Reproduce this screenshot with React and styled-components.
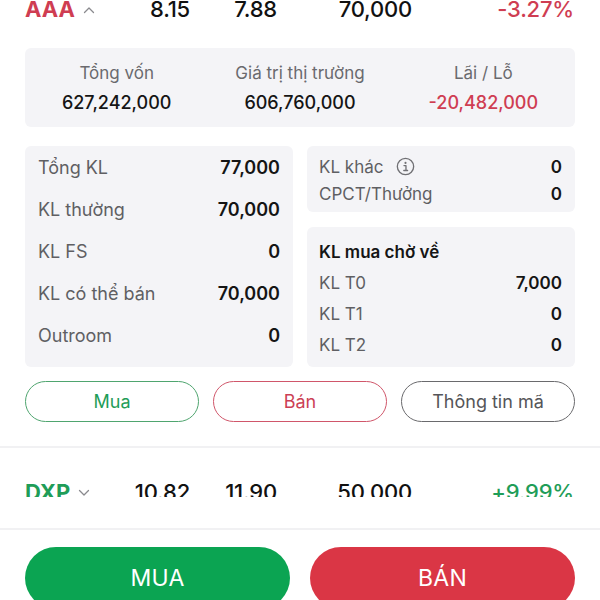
import React from 'react'
import styled, { createGlobalStyle } from 'styled-components'

const GlobalStyle = createGlobalStyle`
  html, body {
    margin: 0;
    padding: 0;
    background: #ffffff;
  }
  body {
    font-family: 'Inter', 'Noto Sans', sans-serif;
    color: #151515;
  }
`

const RED = '#cf3d52'
const GREEN = '#1f9d58'

const Caret = ({ up }) => (
  <CaretSvg viewBox="0 0 12 8" width="12" height="8">
    <polyline
      points={up ? '1.5,6.5 6,2 10.5,6.5' : '1.5,1.5 6,6 10.5,1.5'}
      fill="none"
      stroke="#8a8a8e"
      strokeWidth="1.3"
      strokeLinecap="round"
      strokeLinejoin="round"
    />
  </CaretSvg>
)

const InfoIcon = () => (
  <svg viewBox="0 0 20 20" width="19" height="19">
    <circle cx="10" cy="10" r="8.6" fill="none" stroke="#707074" strokeWidth="1.4" />
    <circle cx="10" cy="6.2" r="1.1" fill="#707074" />
    <path d="M8.4 9h2.1v5M8.2 14.2h4" fill="none" stroke="#707074" strokeWidth="1.4" strokeLinecap="round" strokeLinejoin="round" />
  </svg>
)

const StockRow = ({ symbol, up, tone, price, avg, qty, change }) => (
  <Row>
    <Symbol color={tone}>
      {symbol}
      <Caret up={up} />
    </Symbol>
    <Num>{price}</Num>
    <Num>{avg}</Num>
    <Num>{qty}</Num>
    <Num color={tone}>{change}</Num>
  </Row>
)

const Component = () => {
  return (
    <Root>
      <GlobalStyle />
      <List>
        <StockRow symbol="AAA" up tone={RED} price="8.15" avg="7.88" qty="70,000" change="-3.27%" />
        <Detail>
          <Summary>
            <SumCol>
              <SumLabel>Tổng vốn</SumLabel>
              <SumValue>627,242,000</SumValue>
            </SumCol>
            <SumCol>
              <SumLabel>Giá trị thị trường</SumLabel>
              <SumValue>606,760,000</SumValue>
            </SumCol>
            <SumCol>
              <SumLabel>Lãi / Lỗ</SumLabel>
              <SumValue color={RED}>-20,482,000</SumValue>
            </SumCol>
          </Summary>

          <Grid>
            <Panel>
              <Line h={42}><Label big>Tổng KL</Label><Value big>77,000</Value></Line>
              <Line h={42}><Label big>KL thường</Label><Value big>70,000</Value></Line>
              <Line h={42}><Label big>KL FS</Label><Value big>0</Value></Line>
              <Line h={42}><Label big>KL có thể bán</Label><Value big>70,000</Value></Line>
              <Line h={42}><Label big>Outroom</Label><Value big>0</Value></Line>
            </Panel>
            <Side>
              <Panel pad="7px 13px 5px 12px">
                <Line h={27}><Label>KL khác <InfoIcon /></Label><Value>0</Value></Line>
                <Line h={27}><Label>CPCT/Thưởng</Label><Value>0</Value></Line>
              </Panel>
              <Panel pad="9px 13px 7px 12px" grow>
                <Line h={31}><Title>KL mua chờ về</Title></Line>
                <Line h={31}><Label>KL T0</Label><Value>7,000</Value></Line>
                <Line h={31}><Label>KL T1</Label><Value>0</Value></Line>
                <Line h={31}><Label>KL T2</Label><Value>0</Value></Line>
              </Panel>
            </Side>
          </Grid>

          <Actions>
            <Outline color={GREEN} border="#4fa56f">Mua</Outline>
            <Outline color="#cc3f55" border="#d0566a">Bán</Outline>
            <Outline color="#555558" border="#6a6a6d">Thông tin mã</Outline>
          </Actions>
        </Detail>
        <Divider />
        <StockRow symbol="DXP" tone={GREEN} price="10.82" avg="11.90" qty="50,000" change="+9.99%" />
      </List>
      <Footer>
        <FooterBar>
          <BigButton bg="#0ba452">MUA</BigButton>
          <BigButton bg="#da3645">BÁN</BigButton>
        </FooterBar>
      </Footer>
    </Root>
  )
}

const Root = styled.div`
  width: 600px;
  height: 600px;
  display: flex;
  flex-direction: column;
  overflow: hidden;
  background: #fff;
`

const List = styled.div`
  height: 497px;
  flex: none;
  overflow: hidden;
  display: flex;
  flex-direction: column;
`

const Row = styled.div`
  display: grid;
  grid-template-columns: 105px 60px 87px 135px 1fr;
  align-items: center;
  padding: 0 26px 0 25px;
  height: 26px;
  flex: none;
  &:first-child {
    margin-top: -4px;
  }
  &:last-child {
    margin-top: 31px;
  }
`

const Symbol = styled.div`
  display: flex;
  align-items: center;
  gap: 8px;
  font-size: 22px;
  line-height: 26px;
  font-weight: 700;
  color: ${props => props.color};
`

const CaretSvg = styled.svg`
  margin-top: 2px;
`

const Num = styled.div`
  text-align: right;
  font-size: 22px;
  line-height: 26px;
  font-weight: 500;
  color: ${props => props.color || '#111'};
  letter-spacing: -0.2px;
`

const Detail = styled.div`
  padding: 26px 25px 0;
  display: flex;
  flex-direction: column;
`

const Summary = styled.div`
  display: grid;
  grid-template-columns: repeat(3, 1fr);
  background: #f4f4f7;
  border-radius: 6px;
  padding: 13px 0 12px;
`

const SumCol = styled.div`
  display: flex;
  flex-direction: column;
  align-items: center;
  gap: 6px;
`

const SumLabel = styled.div`
  font-size: 17px;
  line-height: 24px;
  color: #6a6a6e;
`

const SumValue = styled.div`
  font-size: 18px;
  line-height: 24px;
  font-weight: 500;
  color: ${props => props.color || '#151515'};
`

const Grid = styled.div`
  display: grid;
  grid-template-columns: 1fr 1fr;
  gap: 14px;
  margin-top: 19px;
`

const Side = styled.div`
  display: flex;
  flex-direction: column;
  gap: 15px;
`

const Panel = styled.div`
  background: #f4f4f7;
  border-radius: 6px;
  padding: ${props => props.pad || '0 13px 0 13px'};
  flex: ${props => (props.grow ? 1 : 'none')};
`

const Line = styled.div`
  display: flex;
  align-items: center;
  justify-content: space-between;
  height: ${props => props.h}px;
`

const Label = styled.div`
  display: flex;
  align-items: center;
  gap: 13px;
  font-size: ${props => (props.big ? 18 : 17)}px;
  color: #5f5f63;
`

const Title = styled.div`
  font-size: 17px;
  font-weight: 600;
  color: #151515;
`

const Value = styled.div`
  font-size: ${props => (props.big ? 18 : 17)}px;
  font-weight: 600;
  color: #151515;
`

const Actions = styled.div`
  display: grid;
  grid-template-columns: repeat(3, 1fr);
  gap: 14px;
  margin-top: 14px;
`

const Outline = styled.div`
  height: 41px;
  box-sizing: border-box;
  border: 1.5px solid ${props => props.border};
  border-radius: 21px;
  display: flex;
  align-items: center;
  justify-content: center;
  font-size: 18px;
  color: ${props => props.color};
`

const Divider = styled.div`
  height: 2px;
  background: #f1f1f3;
  margin-top: 24px;
  flex: none;
`

const Footer = styled.div`
  flex: 1;
  padding-top: 31px;
  display: flex;
  flex-direction: column;
`

const FooterBar = styled.div`
  border-top: 2px solid #f1f1f3;
  padding: 17px 25px 0;
  display: grid;
  grid-template-columns: 1fr 1fr;
  gap: 20px;
`

const BigButton = styled.div`
  height: 62px;
  border-radius: 31px;
  background: ${props => props.bg};
  color: #fff;
  display: flex;
  align-items: center;
  justify-content: center;
  font-size: 23px;
  font-weight: 400;
  letter-spacing: 0.3px;
`

export default Component
